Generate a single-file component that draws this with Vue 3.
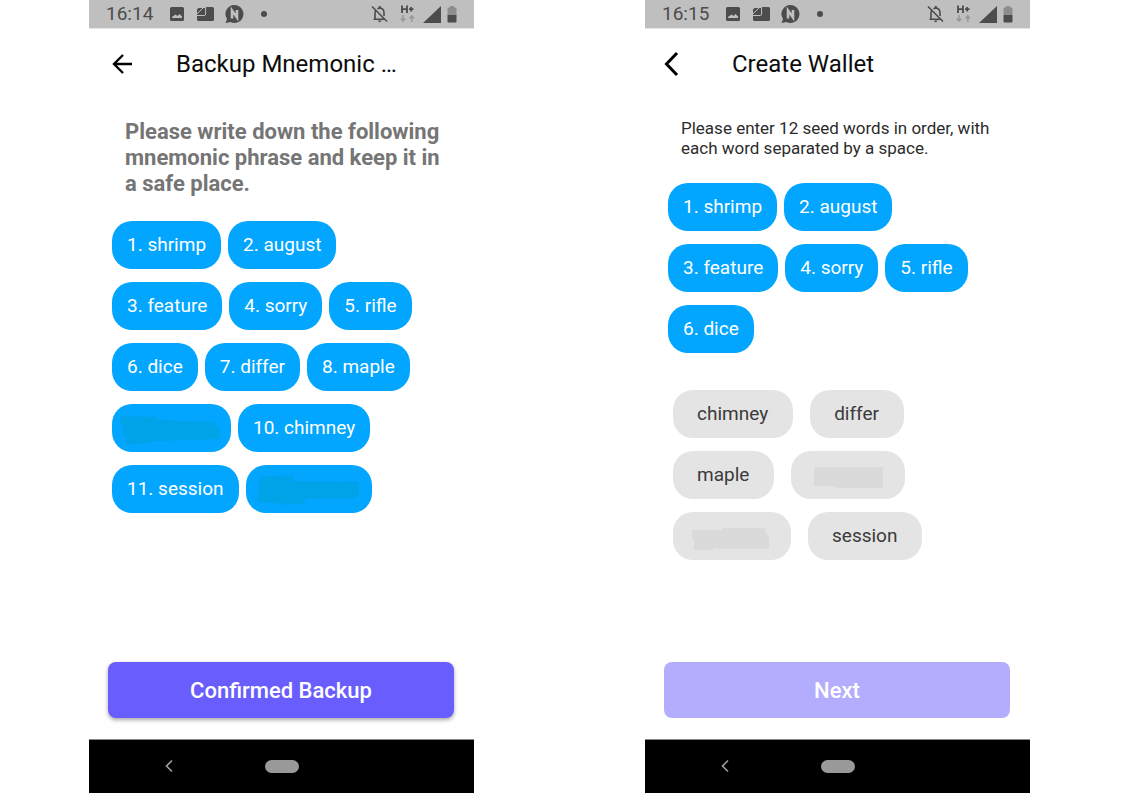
<script setup>
const seedWords = ['1. shrimp', '2. august', '3. feature', '4. sorry', '5. rifle', '6. dice']

const backupWords = [
  ...seedWords.map((text) => ({ text })),
  { text: '7. differ' },
  { text: '8. maple' },
  { cover: 'M8 12L45 13V16L102 18L104 21L108 26V35L78 36L40 37V39L14 40V33L11 30V21L8 19Z', width: 119 },
  { text: '10. chimney' },
  { text: '11. session' },
  { cover: 'M13 12L30 11L47 10V16L95 17L113 16V31L107 33L59 34V38L40 40L30 38L12 37V27L13 25Z', width: 126 },
]

const choices = [
  { text: 'chimney' },
  { text: 'differ' },
  { text: 'maple' },
  { cover: 'M23 16H92V37H48L40 35H23Z', width: 114 },
  { cover: 'M19 18H49V16H92L93 22L96 23V37H50L41 36L40 38H21V28L19 27Z', width: 118 },
  { text: 'session' },
]

const screens = [
  { id: 'backup', time: '16:14', title: 'Backup Mnemonic …', action: 'Confirmed Backup' },
  { id: 'create', time: '16:15', title: 'Create Wallet', action: 'Next' },
]
</script>

<template>
  <main class="board">
    <section v-for="s in screens" :key="s.id" class="phone">
      <div class="status">
        <time class="clock">{{ s.time }}</time>
        <svg class="image-icon" width="14" height="14" viewBox="0 0 14 14" aria-hidden="true">
          <path fill="#4c4c4c" fill-rule="evenodd" d="M1.500 0h11A1.500 1.500 0 0 1 14 1.500v11a1.500 1.500 0 0 1-1.500 1.500h-11A1.500 1.500 0 0 1 0 12.500v-11A1.500 1.500 0 0 1 1.500 0zM2 11h10V9.500L9.500 7 7.500 9 5.500 7.500 2 10z" />
        </svg>
        <svg class="card-icon" width="17" height="14" viewBox="0 0 17 14" aria-hidden="true">
          <path fill="#4c4c4c" d="M1.500 1H8.500V0H15.500A1.500 1.500 0 0 1 17 1.500V12.500A1.500 1.500 0 0 1 15.500 14H1.500A1.500 1.500 0 0 1 0 12.500V2.500z" />
          <path fill="none" stroke="#bfbfbf" stroke-width="1" d="M0 6.800L6.500 0.500M8.600 0V7Q8.600 8.500 7.200 8.500H0" />
        </svg>
        <svg class="chat-icon" width="19" height="18" viewBox="0 0 19 18" aria-hidden="true">
          <path fill="#4c4c4c" d="M9.500 0a9 9 0 1 1-4 17.100L0.500 18L2 14A9 9 0 0 1 9.500 0z" />
          <path fill="none" stroke="#c0c0c0" stroke-width="2.600" d="M7 13.500V5.500L12 12.500V5" />
        </svg>
        <i class="dot"></i>
        <svg class="bell-icon" width="17" height="18" viewBox="0 0 17 18" aria-hidden="true">
          <path fill="none" stroke="#4c4c4c" stroke-width="1.600" d="M1 1.500L16 16.500M4 14V8Q4 6 5 5M6.500 3.800Q8 3 9 3Q13 3.500 13 8V11M2.500 14.300H13" />
          <path fill="#4c4c4c" d="M7.800 1h2v2h-2zM7 15.500h3.500Q10 17.300 8.700 17.300T7 15.500z" />
        </svg>
        <svg class="net-icon" width="15" height="18" viewBox="0 0 15 18" aria-hidden="true">
          <path fill="none" stroke="#4c4c4c" stroke-width="1.800" d="M2 0.500V8M7 0.500V8M2 4.200H7M9 4.200H13.500M11.200 2V6.500" />
          <path fill="none" stroke="#999" stroke-width="1.600" d="M3 10V16M0.800 13.500L3 16L5.200 13.500M11.800 17V11.200M9.500 13.500L11.800 11L14 13.500" />
        </svg>
        <svg class="signal-icon" width="18" height="17" viewBox="0 0 18 17" aria-hidden="true">
          <path fill="#4c4c4c" d="M18 0V17H0z" />
        </svg>
        <svg class="battery-icon" width="10" height="17" viewBox="0 0 10 17" aria-hidden="true">
          <path fill="#8e8e8e" d="M3 0h4v1.500h1.500Q9.500 1.500 9.500 2.500V9h-9V2.500Q0.500 1.500 1.500 1.500H3z" />
          <path fill="#4c4c4c" d="M0.500 9h9v6.500q0 1-1 1h-7q-1 0-1-1z" />
        </svg>
      </div>

      <header class="bar">
        <button class="back" type="button" aria-label="Back">
          <svg v-if="s.id === 'backup'" width="28" height="28" viewBox="0 0 28 28" aria-hidden="true">
            <path fill="none" stroke="#000" stroke-width="2.400" d="M24 14H6M15 5L6 14L15 23" />
          </svg>
          <svg v-else width="28" height="28" viewBox="0 0 28 28" aria-hidden="true">
            <path fill="none" stroke="#000" stroke-width="3" d="M13 3L2.500 14L13 25" />
          </svg>
        </button>
        <h1>{{ s.title }}</h1>
      </header>

      <template v-if="s.id === 'backup'">
        <p class="lead">Please write down the following mnemonic phrase and keep it in a safe place.</p>
        <ol class="chips">
          <li v-for="(w, i) in backupWords" :key="i" class="chip" :class="{ covered: w.cover }">
            <svg v-if="w.cover" :width="w.width" height="48" aria-hidden="true"><path fill="#00a2e8" :d="w.cover" /></svg>
            <template v-else>{{ w.text }}</template>
          </li>
        </ol>
      </template>

      <template v-else>
        <p class="hint">Please enter 12 seed words in order, with each word separated by a space.</p>
        <div class="chips">
          <button v-for="w in seedWords" :key="w" type="button" class="chip">{{ w }}</button>
        </div>
        <div class="choices">
          <button v-for="(w, i) in choices" :key="i" type="button" class="chip choice" :class="{ covered: w.cover }" :aria-label="w.cover ? 'Hidden word' : null">
            <svg v-if="w.cover" :width="w.width" height="48" aria-hidden="true"><path fill="#dadada" :d="w.cover" /></svg>
            <template v-else>{{ w.text }}</template>
          </button>
        </div>
      </template>

      <button class="action" type="button" :disabled="s.id === 'create'">{{ s.action }}</button>

      <nav class="system" aria-label="System navigation">
        <button type="button" class="sys-back" aria-label="System back">
          <svg width="10" height="14" viewBox="0 0 10 14" aria-hidden="true">
            <path fill="none" stroke="#a0a0a0" stroke-width="1.600" d="M8 1.500L2.500 7L8 12.500" />
          </svg>
        </button>
        <button type="button" class="home" aria-label="Home"></button>
        <span></span>
      </nav>
    </section>
  </main>
</template>

<style>
body {
  margin: 0;
  background: #fff;
}
</style>

<style scoped>
.board {
  display: grid;
  grid-template-columns: 1fr 1fr;
  gap: 171px;
  box-sizing: border-box;
  min-height: 100vh;
  padding: 0 93px 1px 89px;
  font-family: Roboto, "Liberation Sans", sans-serif;
}
.phone {
  display: flex;
  flex-direction: column;
  min-width: 0;
}
button {
  border: 0;
  padding: 0;
  background: none;
  font-family: inherit;
}
.status {
  display: flex;
  align-items: center;
  height: 28px;
  padding: 0 17px;
  background: #bfbfbf;
  color: #4c4c4c;
  border-bottom: 1px solid #e4e4e4;
}
.clock {
  font-size: 19px;
  line-height: 28px;
}
.image-icon {
  margin-left: 17px;
}
.card-icon {
  margin-left: 13px;
}
.chat-icon {
  margin-left: 11px;
}
.dot {
  width: 6px;
  height: 6px;
  margin-left: 17px;
  border-radius: 50%;
  background: #4c4c4c;
}
.bell-icon {
  margin-left: auto;
}
.net-icon {
  margin-left: 12px;
}
.signal-icon {
  margin-left: 8px;
}
.battery-icon {
  margin-left: 6px;
}
.bar {
  display: flex;
  align-items: center;
  height: 70px;
  padding: 0 19px;
}
.back {
  width: 28px;
  height: 28px;
  margin-right: 40px;
}
.back svg {
  display: block;
}
h1 {
  margin: 0;
  font-size: 24px;
  line-height: 32px;
  font-weight: 400;
  color: #0c0c0c;
  white-space: nowrap;
}
.lead {
  margin: 20px 28px 0 36px;
  font-size: 22px;
  line-height: 26px;
  font-weight: 700;
  color: #757575;
}
.hint {
  margin: 19px 36px 1px;
  font-size: 17px;
  line-height: 20px;
  color: #2c2c2c;
}
.chips {
  display: flex;
  flex-wrap: wrap;
  gap: 13px 7px;
  margin: 24px 23px 0;
  padding: 0;
  list-style: none;
}
.chip {
  height: 48px;
  padding: 0 15px;
  border-radius: 20px;
  background: #02a6ff;
  color: #fff;
  font-size: 19px;
  line-height: 48px;
  white-space: nowrap;
}
.choices {
  display: flex;
  flex-wrap: wrap;
  gap: 13px 17px;
  margin: 37px 28px 0;
}
.choice {
  padding: 0 25px 0 24px;
  background: #e4e4e4;
  color: #3a3a3a;
}
.covered {
  padding: 0;
}
.covered svg {
  display: block;
}
.action {
  height: 56px;
  margin: auto 20px 21px 19px;
  border-radius: 8px;
  background: #6a5dfd;
  box-shadow: 0 2px 4px rgba(0, 0, 0, 0.35);
  color: #fff;
  font-size: 22px;
  font-weight: 500;
}
.action:disabled {
  background: #b4adfd;
  box-shadow: none;
}
.system {
  display: grid;
  grid-template-columns: 1fr 34px 1fr;
  align-items: center;
  height: 53px;
  background: #000;
  border-top: 1px solid #888;
}
.sys-back {
  justify-self: center;
  width: 24px;
  height: 24px;
  padding-top: 2px;
  margin-right: 16px;
}
.home {
  height: 13px;
  border-radius: 7px;
  background: #999;
}
</style>
